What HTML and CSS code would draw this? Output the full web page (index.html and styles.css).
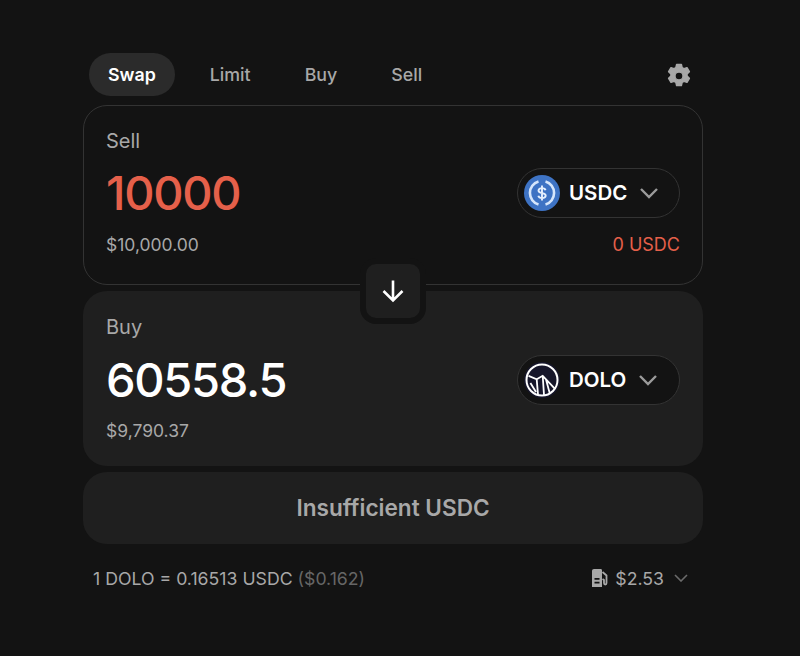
FILE: index.html
```html
<!DOCTYPE html>
<html lang="en">
<head>
    <meta charset="UTF-8">
    <meta name="viewport" content="width=device-width, initial-scale=1.0">
    <title>Swap</title>
    <link rel="stylesheet" href="styles.css">
</head>
<body>

<div class="swap">
    <div class="tabs">
        <div class="tab tab-active">Swap</div>
        <div class="tab">Limit</div>
        <div class="tab">Buy</div>
        <div class="tab">Sell</div>
        <svg class="gear" viewBox="0 0 26 26">
            <path fill="#a8a8a8" fill-rule="evenodd" d="M10.6 1.4h4.8l.7 3.1 1.9 1.1 3-1 2.4 4.100-2.300 2.200v2.200l2.300 2.200-2.400 4.100-3-1-1.900 1.100-.7 3.100h-4.800l-.7-3.100-1.900-1.100-3 1-2.400-4.100 2.300-2.200v-2.200L2.600 8.700 5 4.600l3 1 1.900-1.100zM13 9a4 4 0 1 0 0 8 4 4 0 0 0 0-8z" stroke="#a8a8a8" stroke-width="1.400" stroke-linejoin="round"/>
        </svg>
    </div>

    <div class="panel panel-sell">
        <div class="label">Sell</div>
        <div class="row row-main">
            <div class="amount amount-error">10000</div>
            <div class="token">
                <svg class="token-icon" viewBox="0 0 36 36">
                    <circle cx="18" cy="18" r="18" fill="#3e73c4"/>
                    <path d="M14.500 6.500a12 12 0 0 0 0 23M21.500 6.500a12 12 0 0 1 0 23" fill="none" stroke="#d6e6fb" stroke-width="2.600"/>
                    <path d="M21.500 15.200c-.3-1.400-1.700-2.100-3.500-2.100-2 0-3.500 1-3.500 2.500 0 3.700 7.200 1.500 7.200 5 0 1.500-1.600 2.500-3.700 2.500-1.900 0-3.300-.9-3.700-2.300M18 10.600v14.800" fill="none" stroke="#e6f0fd" stroke-width="1.900"/>
                </svg>
                <span class="token-name">USDC</span>
                <svg class="chevron" viewBox="0 0 20 12"><path d="M2 2l8 8 8-8" fill="none" stroke="#9b9b9b" stroke-width="2.400"/></svg>
            </div>
        </div>
        <div class="row row-sub">
            <div class="sub">$10,000.00</div>
            <div class="balance">0 USDC</div>
        </div>
    </div>

    <div class="panel panel-buy">
        <div class="arrow-box">
            <svg viewBox="0 0 24 24"><path d="M12 1.500v20M2.500 12l9.500 9.500 9.500-9.500" fill="none" stroke="#fff" stroke-width="2.600"/></svg>
        </div>
        <div class="label">Buy</div>
        <div class="row row-main">
            <div class="amount">60558.5</div>
            <div class="token">
                <svg class="token-icon" viewBox="0 0 36 36">
                    <circle cx="18" cy="18" r="18" fill="#16162a"/>
                    <circle cx="18" cy="18" r="15.500" fill="none" stroke="#fff" stroke-width="2"/>
                    <path d="M4.600 13.800l8.100 3.500 6-3.500L31 26.900M12.700 17.300L14 32.500M18.700 13.800L20 33M22 17.500l3.800 13.900M6.400 21L12 30" fill="none" stroke="#fff" stroke-width="1.800"/>
                </svg>
                <span class="token-name">DOLO</span>
                <svg class="chevron" viewBox="0 0 20 12"><path d="M2 2l8 8 8-8" fill="none" stroke="#9b9b9b" stroke-width="2.400"/></svg>
            </div>
        </div>
        <div class="row row-sub">
            <div class="sub">$9,790.37</div>
        </div>
    </div>

    <div class="submit">Insufficient USDC</div>

    <div class="footer">
        <div class="rate">1 DOLO = 0.16513 USDC <span class="rate-usd">($0.162)</span></div>
        <div class="gas">
            <svg class="gas-icon" viewBox="0 0 18 20">
                <path fill="#a8a8a8" fill-rule="evenodd" d="M3 1h6.500c1 0 1.500.5 1.500 1.500V19H1V3c0-1.200.8-2 2-2zM3.500 10v1.800h5V10zm0 3.800v1.800h5v-1.800z"/>
                <path d="M11.500 4l4 3.500v7.500c0 2-2.500 2-2.500 0v-3l-1.500-1" fill="none" stroke="#a8a8a8" stroke-width="1.800"/>
            </svg>
            <span>$2.53</span>
            <svg class="gas-chevron" viewBox="0 0 14 8"><path d="M1 1l6 6 6-6" fill="none" stroke="#6b6b6b" stroke-width="1.600"/></svg>
        </div>
    </div>
</div>

</body>
</html>
```

FILE: styles.css
```css
body {
    font-family: Inter, "Liberation Sans", sans-serif;
    margin: 0;
    padding: 0;
    background-color: #131313;
    color: #fff;
}

.swap {
    width: 620px;
    margin: 0 0 0 83px;
    padding-top: 53px;
}

.tabs {
    display: flex;
    align-items: center;
    gap: 16px;
    height: 43px;
    margin-bottom: 9px;
    padding: 0 11px 0 6px;
}

.tab {
    padding: 0 19px;
    height: 43px;
    line-height: 44px;
    border-radius: 22px;
    font-size: 17.800px;
    font-weight: 500;
    color: #a8a8a8;
}

.tab-active {
    background-color: #2b2b2b;
    color: #fff;
    font-weight: 600;
}

.gear {
    width: 26px;
    height: 26px;
    margin-left: auto;
    margin-top: 2px;
}

.panel {
    position: relative;
    box-sizing: border-box;
    padding: 0 22px;
    border-radius: 24px;
}

.panel-sell {
    height: 180px;
    margin-bottom: 6px;
    padding-top: 23px;
    border: 1px solid #333;
}

.panel-buy {
    height: 175px;
    margin-bottom: 6px;
    padding: 24px 23px 0;
    background-color: #1f1f1f;
}

.label {
    font-size: 20px;
    line-height: 24px;
    color: #a8a8a8;
}

.row {
    display: flex;
    align-items: center;
    justify-content: space-between;
}

.row-main {
    height: 50px;
    margin-top: 15px;
}

.panel-buy .row-main {
    margin-top: 16px;
}

.row-sub {
    margin-top: 16px;
    font-size: 17.500px;
    line-height: 21px;
}

.panel-buy .row-sub {
    margin-top: 15px;
}

.amount {
    padding-bottom: 2px;
    font-size: 47px;
    font-weight: 450;
    letter-spacing: -1.300px;
    color: #fff;
}

.amount-error {
    color: #e5604a;
}

.sub {
    color: #a8a8a8;
}

.balance {
    font-size: 18px;
    color: #e5604a;
}

.token {
    box-sizing: border-box;
    display: flex;
    align-items: center;
    width: 163px;
    height: 50px;
    padding-left: 6px;
    border: 1px solid #333;
    border-radius: 25px;
    background-color: #131313;
}

.token-icon {
    width: 36px;
    height: 36px;
    flex-shrink: 0;
}

.token-name {
    margin-left: 9px;
    padding-bottom: 2px;
    font-size: 20.500px;
    font-weight: 600;
}

.chevron {
    width: 20px;
    height: 12px;
    margin-left: 12px;
}

.arrow-box {
    position: absolute;
    left: 277px;
    top: -33px;
    display: flex;
    align-items: center;
    justify-content: center;
    width: 54px;
    height: 54px;
    border: 6px solid #131313;
    border-radius: 16px;
    background-color: #1f1f1f;
    z-index: 1;
}

.arrow-box svg {
    width: 24px;
    height: 24px;
}

.submit {
    height: 72px;
    line-height: 72px;
    border-radius: 24px;
    background-color: #1f1f1f;
    text-align: center;
    font-size: 22.600px;
    font-weight: 600;
    color: #a8a8a8;
}

.footer {
    display: flex;
    align-items: center;
    justify-content: space-between;
    margin-top: 22px;
    padding: 0 15px 0 10px;
    height: 24px;
    font-size: 17.700px;
    color: #a8a8a8;
}

.rate-usd {
    color: #666;
}

.gas {
    display: flex;
    align-items: center;
}

.gas-icon {
    width: 18px;
    height: 20px;
    margin-right: 6px;
}

.gas-chevron {
    width: 14px;
    height: 8px;
    margin-left: 10px;
}
```
